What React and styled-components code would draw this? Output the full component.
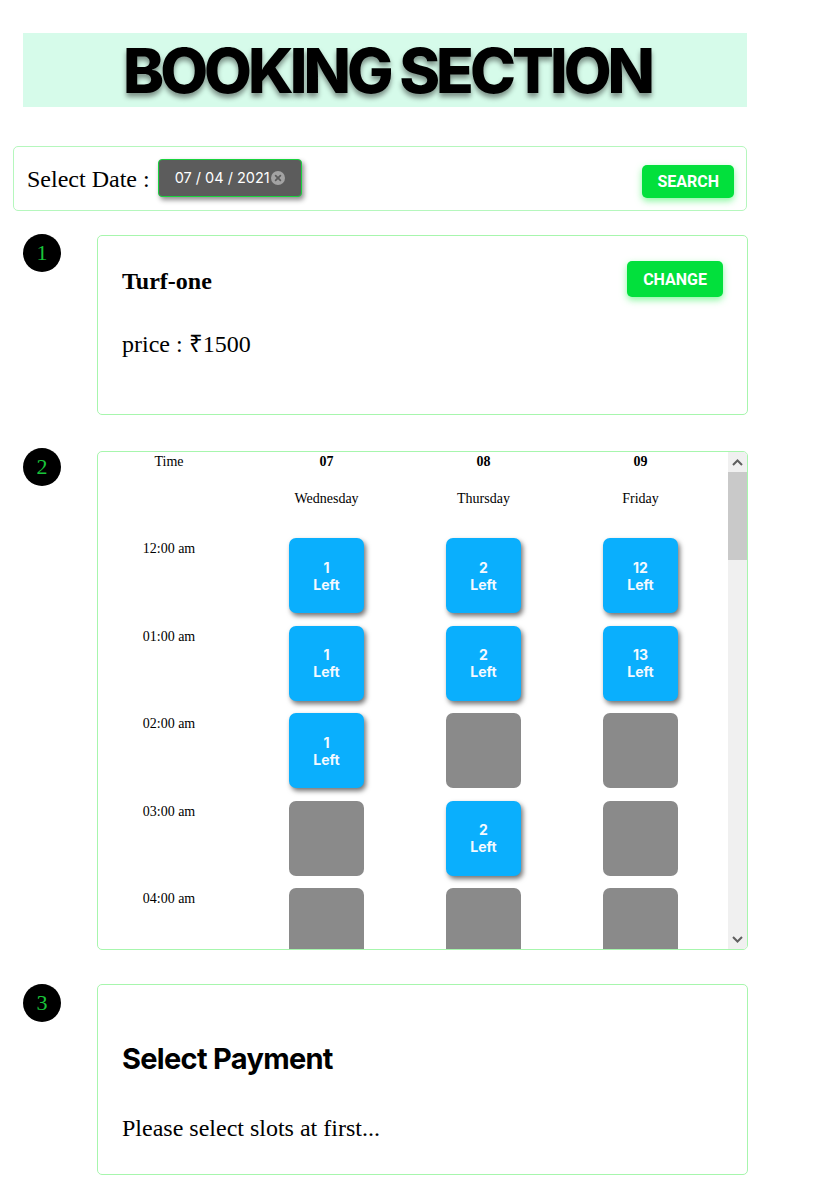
import React from "react";
import styled, { createGlobalStyle } from "styled-components";

const GlobalStyle = createGlobalStyle`
  html, body { margin: 0; padding: 0; background: #ffffff; }
  body { font-family: "Liberation Serif", "Times New Roman", serif; color: #000; }
  * { box-sizing: border-box; }
`;

const Page = styled.div`
  width: 825px;
  padding: 33px 0 20px 13px;
  display: flex;
  flex-direction: column;
`;

const Banner = styled.div`
  margin-left: 10px;
  width: 724px;
  height: 74px;
  background: #d6fbea;
  display: flex;
  align-items: center;
  justify-content: center;
`;

const BannerTitle = styled.h1`
  margin: 0;
  font-family: Inter, "Liberation Sans", sans-serif;
  font-weight: 800;
  font-size: 62px;
  letter-spacing: -4px;
  line-height: 1;
  padding-top: 2px;
  padding-left: 4px;
  text-shadow: 0 4px 5px rgba(0, 0, 0, 0.42);
`;

const DateBar = styled.div`
  margin-top: 39px;
  width: 734px;
  height: 65px;
  border: 1px solid #b5f7bd;
  border-radius: 5px;
  display: flex;
  align-items: center;
  padding: 0 12px 0 13px;
`;

const Label = styled.span`
  font-size: 24px;
  line-height: 28px;
  margin-right: 8px;
`;

const DateInput = styled.div`
  width: 144px;
  height: 38px;
  margin-top: -2px;
  background: #5c5c5c;
  border: 1px solid #19d33e;
  border-radius: 4px;
  box-shadow: 2px 3px 5px rgba(0, 0, 0, 0.45);
  display: flex;
  align-items: center;
  padding-left: 16px;
  gap: 1px;
  color: #ffffff;
  font-family: Inter, "Liberation Sans", sans-serif;
  font-size: 14.5px;
`;

const ClearIcon = styled.svg`
  width: 14px;
  height: 14px;
  flex: none;
`;

const GreenButton = styled.button`
  margin-left: auto;
  margin-top: ${(p) => p.$mt || 0}px;
  border: none;
  border-radius: 5px;
  background: #02e03c;
  color: #ffffff;
  font-family: Roboto, "Liberation Sans", sans-serif;
  font-weight: 700;
  font-size: 16px;
  height: ${(p) => p.$h}px;
  padding: 0 ${(p) => p.$px}px;
  box-shadow: 0 3px 7px rgba(40, 240, 80, 0.55);
  cursor: pointer;
`;

const Step = styled.div`
  display: flex;
  align-items: flex-start;
  margin-top: ${(p) => p.$mt}px;
  padding-left: 10px;
`;

const StepBadge = styled.div`
  width: 38px;
  height: 38px;
  flex: none;
  border-radius: 50%;
  background: #000;
  color: #19c43a;
  font-size: 22px;
  display: flex;
  align-items: center;
  justify-content: center;
  margin-top: ${(p) => p.$offset}px;
  margin-right: 36px;
`;

const Card = styled.div`
  width: 651px;
  border: 1px solid #a7f6ad;
  border-radius: 5px;
  background: #fff;
`;

const InfoCard = styled(Card)`
  height: 180px;
  padding: 25px 24px 0 24px;
`;

const CardHead = styled.div`
  display: flex;
  align-items: center;
  justify-content: space-between;
  height: 36px;
`;

const TurfName = styled.h2`
  margin: 0;
  font-size: 24px;
  font-weight: 700;
  line-height: 28px;
  padding-top: 3px;
`;

const BodyText = styled.p`
  margin: ${(p) => p.$mt}px 0 0 0;
  font-size: 24px;
  line-height: 28px;
`;

const ScheduleCard = styled(Card)`
  height: 499px;
  overflow: hidden;
  display: flex;
`;

const Scroller = styled.div`
  flex: 1;
  height: 497px;
  overflow: hidden;
`;

const ScrollBar = styled.div`
  width: 19px;
  flex: none;
  background: #f0f0f0;
  display: flex;
  flex-direction: column;
`;

const ScrollArrow = styled.div`
  height: 20px;
  display: flex;
  align-items: center;
  justify-content: center;
  flex: none;
`;

const ScrollThumb = styled.div`
  height: 88px;
  background: #c9c9c9;
`;

const ScrollRest = styled.div`
  flex: 1;
`;

const Grid = styled.div`
  display: grid;
  grid-template-columns: 150px repeat(3, 157px);
  font-size: 14px;
  line-height: 20px;
`;

const HeadCell = styled.div`
  text-align: center;
  font-weight: ${(p) => (p.$bold ? 700 : 400)};
  padding-right: ${(p) => (p.$time ? 8 : 0)}px;
`;

const DayCell = styled.div`
  text-align: center;
  margin-top: 17px;
  margin-bottom: 29px;
`;

const TimeCell = styled.div`
  text-align: center;
  padding-right: 8px;
  padding-top: 1px;
`;

const SlotCell = styled.div`
  display: flex;
  justify-content: center;
  height: 87.5px;
`;

const Slot = styled.div`
  width: 75px;
  height: 75px;
  border-radius: 7px;
  background: ${(p) => (p.$free ? "#0aaffd" : "#8a8a8a")};
  box-shadow: ${(p) => (p.$free ? "2px 3px 5px rgba(0,0,0,0.55)" : "none")};
  color: #f4f9ff;
  font-family: Inter, Roboto, "Liberation Sans", sans-serif;
  font-weight: 700;
  font-size: 14px;
  line-height: 17px;
  display: flex;
  flex-direction: column;
  align-items: center;
  justify-content: center;
`;

const PaymentCard = styled(Card)`
  height: 191px;
  padding: 56px 24px 0 24px;
`;

const PaymentTitle = styled.h2`
  margin: 0;
  font-family: Inter, "Liberation Sans", sans-serif;
  font-weight: 700;
  font-size: 29px;
  letter-spacing: -0.7px;
  line-height: 36px;
`;

const days = [
  { date: "07", name: "Wednesday" },
  { date: "08", name: "Thursday" },
  { date: "09", name: "Friday" },
];

const rows = [
  { time: "12:00 am", slots: [1, 2, 12] },
  { time: "01:00 am", slots: [1, 2, 13] },
  { time: "02:00 am", slots: [1, 0, 0] },
  { time: "03:00 am", slots: [0, 2, 0] },
  { time: "04:00 am", slots: [0, 0, 0] },
];

const Chevron = ({ up }) => (
  <svg width="11" height="7" viewBox="0 0 11 7">
    <path
      d={up ? "M1 6 L5.5 1.5 L10 6" : "M1 1 L5.5 5.5 L10 1"}
      fill="none"
      stroke="#5f5f5f"
      strokeWidth="2"
    />
  </svg>
);

export default function App() {
  return (
    <>
      <GlobalStyle />
      <Page>
        <Banner>
          <BannerTitle>BOOKING SECTION</BannerTitle>
        </Banner>

        <DateBar>
          <Label>Select Date :</Label>
          <DateInput>
            <span>07 / 04 / 2021</span>
            <ClearIcon viewBox="0 0 14 14">
              <circle cx="7" cy="7" r="7" fill="#a3a3a3" />
              <path d="M4.6 4.6 L9.4 9.4 M9.4 4.6 L4.6 9.4" stroke="#5c5c5c" strokeWidth="1.7" strokeLinecap="round" />
            </ClearIcon>
          </DateInput>
          <GreenButton $h={33} $px={15} $mt={6}>SEARCH</GreenButton>
        </DateBar>

        <Step $mt={24}>
          <StepBadge $offset={-1}>1</StepBadge>
          <InfoCard>
            <CardHead>
              <TurfName>Turf-one</TurfName>
              <GreenButton $h={36} $px={16}>CHANGE</GreenButton>
            </CardHead>
            <BodyText $mt={33}>price : ₹1500</BodyText>
          </InfoCard>
        </Step>

        <Step $mt={36}>
          <StepBadge $offset={-3}>2</StepBadge>
          <ScheduleCard>
            <Scroller>
              <Grid>
                <HeadCell $time>Time</HeadCell>
                {days.map((d) => (
                  <HeadCell key={d.date} $bold>
                    {d.date}
                  </HeadCell>
                ))}
                <DayCell />
                {days.map((d) => (
                  <DayCell key={d.name}>{d.name}</DayCell>
                ))}
                {rows.map((row) => (
                  <React.Fragment key={row.time}>
                    <TimeCell>{row.time}</TimeCell>
                    {row.slots.map((n, c) => (
                      <SlotCell key={c}>
                        <Slot $free={n > 0}>
                          {n > 0 && (
                            <>
                              <span>{n}</span>
                              <span>Left</span>
                            </>
                          )}
                        </Slot>
                      </SlotCell>
                    ))}
                  </React.Fragment>
                ))}
              </Grid>
            </Scroller>
            <ScrollBar>
              <ScrollArrow>
                <Chevron up />
              </ScrollArrow>
              <ScrollThumb />
              <ScrollRest />
              <ScrollArrow>
                <Chevron />
              </ScrollArrow>
            </ScrollBar>
          </ScheduleCard>
        </Step>

        <Step $mt={34}>
          <StepBadge $offset={0}>3</StepBadge>
          <PaymentCard>
            <PaymentTitle>Select Payment</PaymentTitle>
            <BodyText $mt={37}>Please select slots at first...</BodyText>
          </PaymentCard>
        </Step>
      </Page>
    </>
  );
}
